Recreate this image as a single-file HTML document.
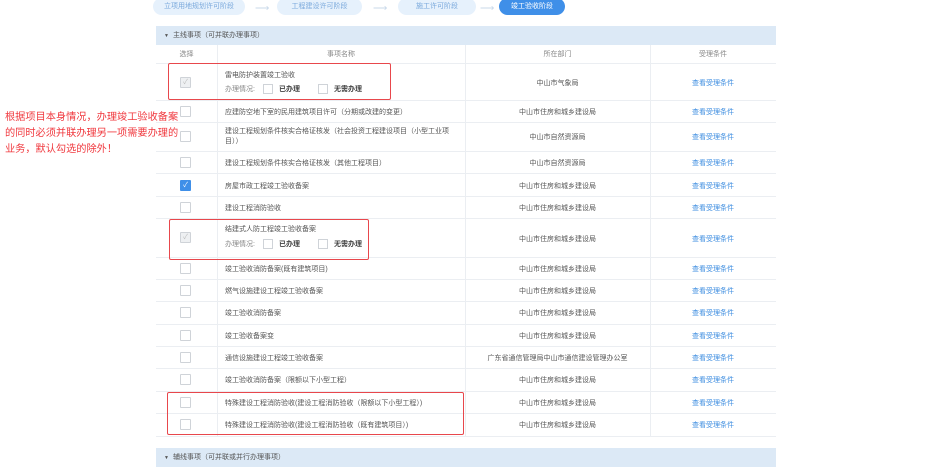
<!DOCTYPE html><html><head><meta charset="utf-8"><style>
body{margin:0;width:941px;height:461px;overflow:hidden;background:#fff;font-family:"Liberation Sans","Noto Sans CJK SC",sans-serif;font-size:7px;color:#555;position:relative}
.a{position:absolute}
.tab{position:absolute;top:-2px;height:17px;border-radius:9px;background:#e6f1fc;color:#7aa9dc;font-size:7px;line-height:17px;text-align:center}
.arr{position:absolute;top:3px;color:#c8d8ea;font-size:10px}
.band{position:absolute;left:156px;width:620px;height:19px;background:#dce9f6;font-size:7px;color:#555;line-height:19px}
.hl{position:absolute;left:156px;width:620px;height:1px;background:#ebeef2}
.vl{position:absolute;width:1px;background:#ebeef2;top:45px;height:391px}
.cb{position:absolute;left:180px;width:9px;height:9px;border:1px solid #cfd3d8;background:#fff;border-radius:1px}
.t{position:absolute;left:225px;white-space:nowrap}
.d{position:absolute;left:465px;width:185px;text-align:center}
.c{position:absolute;left:650px;width:126px;text-align:center;color:#3d8de0}
.red{position:absolute;border:1.5px solid #e8474c;border-radius:2px}
.sc{display:inline-block;width:8px;height:8px;border:1px solid #cfd3d8;vertical-align:middle;margin:0 6px 0 8px}
</style></head><body>
<div class="tab" style="left:153px;width:92px">立项用地规划许可阶段</div>
<div class="arr" style="left:255px">⟶</div>
<div class="tab" style="left:277px;width:85px">工程建设许可阶段</div>
<div class="arr" style="left:373px">⟶</div>
<div class="tab" style="left:398px;width:78px">施工许可阶段</div>
<div class="arr" style="left:480px">⟶</div>
<div class="tab" style="left:499px;width:66px;background:#3f8fe8;color:#fff">竣工验收阶段</div>

<div class="band" style="top:26px"><span style="margin:0 4px 0 8px;font-size:5px">▼</span>主线事项（可并联办理事项）</div>
<div class="band" style="top:448px"><span style="margin:0 4px 0 8px;font-size:5px">▼</span>辅线事项（可并联或并行办理事项）</div>

<div class="vl" style="left:217px"></div><div class="vl" style="left:465px"></div><div class="vl" style="left:650px"></div>
<div class="a" style="left:156px;width:61px;top:49px;text-align:center;color:#888">选择</div>
<div class="a" style="left:217px;width:248px;top:49px;text-align:center;color:#888">事项名称</div>
<div class="d" style="top:49px;color:#888">所在部门</div>
<div class="a" style="left:650px;width:126px;top:49px;text-align:center;color:#888">受理条件</div>

<div class="hl" style="top:63px"></div><div class="hl" style="top:100px"></div><div class="hl" style="top:122px"></div><div class="hl" style="top:151px"></div><div class="hl" style="top:173px"></div><div class="hl" style="top:196px"></div><div class="hl" style="top:218px"></div><div class="hl" style="top:257px"></div><div class="hl" style="top:279px"></div><div class="hl" style="top:301px"></div><div class="hl" style="top:324px"></div><div class="hl" style="top:346px"></div><div class="hl" style="top:368px"></div><div class="hl" style="top:391px"></div><div class="hl" style="top:413px"></div><div class="hl" style="top:436px"></div>

<div class="cb" style="top:77px;background:#eef0f2;color:#bbb;font-size:7px;line-height:9px;text-align:center">✓</div>
<div class="t" style="top:70px">雷电防护装置竣工验收</div>
<div class="t" style="top:84px;color:#888">办理情况:<span class="sc"></span><b style="color:#444">已办理</b><span class="sc" style="margin-left:18px"></span><b style="color:#444">无需办理</b></div>
<div class="d" style="top:78px">中山市气象局</div><div class="c" style="top:78px">查看受理条件</div>

<div class="cb" style="top:106px"></div><div class="t" style="top:107px">应建防空地下室的民用建筑项目许可（分期或改建的变更）</div><div class="d" style="top:107px">中山市住房和城乡建设局</div><div class="c" style="top:107px">查看受理条件</div>
<div class="cb" style="top:131px"></div><div class="t" style="top:127px;line-height:10px">建设工程规划条件核实合格证核发（社会投资工程建设项目（小型工业项<br>目））</div><div class="d" style="top:132px">中山市自然资源局</div><div class="c" style="top:132px">查看受理条件</div>
<div class="cb" style="top:157px"></div><div class="t" style="top:158px">建设工程规划条件核实合格证核发（其他工程项目）</div><div class="d" style="top:158px">中山市自然资源局</div><div class="c" style="top:158px">查看受理条件</div>
<div class="cb" style="top:180px;background:#3f8fe8;border-color:#3f8fe8;color:#fff;font-size:7px;line-height:9px;text-align:center">✓</div><div class="t" style="top:181px">房屋市政工程竣工验收备案</div><div class="d" style="top:181px">中山市住房和城乡建设局</div><div class="c" style="top:181px">查看受理条件</div>
<div class="cb" style="top:202px"></div><div class="t" style="top:203px">建设工程消防验收</div><div class="d" style="top:203px">中山市住房和城乡建设局</div><div class="c" style="top:203px">查看受理条件</div>

<div class="cb" style="top:232px;background:#eef0f2;color:#bbb;font-size:7px;line-height:9px;text-align:center">✓</div>
<div class="t" style="top:224px">结建式人防工程竣工验收备案</div>
<div class="t" style="top:239px;color:#888">办理情况:<span class="sc"></span><b style="color:#444">已办理</b><span class="sc" style="margin-left:18px"></span><b style="color:#444">无需办理</b></div>
<div class="d" style="top:234px">中山市住房和城乡建设局</div><div class="c" style="top:234px">查看受理条件</div>

<div class="cb" style="top:263px"></div><div class="t" style="top:264px">竣工验收消防备案(既有建筑项目)</div><div class="d" style="top:264px">中山市住房和城乡建设局</div><div class="c" style="top:264px">查看受理条件</div>
<div class="cb" style="top:285px"></div><div class="t" style="top:286px">燃气设施建设工程竣工验收备案</div><div class="d" style="top:286px">中山市住房和城乡建设局</div><div class="c" style="top:286px">查看受理条件</div>
<div class="cb" style="top:307px"></div><div class="t" style="top:308px">竣工验收消防备案</div><div class="d" style="top:308px">中山市住房和城乡建设局</div><div class="c" style="top:308px">查看受理条件</div>
<div class="cb" style="top:330px"></div><div class="t" style="top:331px">竣工验收备案变</div><div class="d" style="top:331px">中山市住房和城乡建设局</div><div class="c" style="top:331px">查看受理条件</div>
<div class="cb" style="top:352px"></div><div class="t" style="top:353px">通信设施建设工程竣工验收备案</div><div class="d" style="top:353px">广东省通信管理局中山市通信建设管理办公室</div><div class="c" style="top:353px">查看受理条件</div>
<div class="cb" style="top:374px"></div><div class="t" style="top:375px">竣工验收消防备案（限额以下小型工程）</div><div class="d" style="top:375px">中山市住房和城乡建设局</div><div class="c" style="top:375px">查看受理条件</div>
<div class="cb" style="top:397px"></div><div class="t" style="top:398px">特殊建设工程消防验收(建设工程消防验收（限额以下小型工程）)</div><div class="d" style="top:398px">中山市住房和城乡建设局</div><div class="c" style="top:398px">查看受理条件</div>
<div class="cb" style="top:419px"></div><div class="t" style="top:420px">特殊建设工程消防验收(建设工程消防验收（既有建筑项目）)</div><div class="d" style="top:420px">中山市住房和城乡建设局</div><div class="c" style="top:420px">查看受理条件</div>

<div class="red" style="left:168px;top:63px;width:221px;height:35px"></div>
<div class="red" style="left:169px;top:219px;width:198px;height:39px"></div>
<div class="red" style="left:167px;top:392px;width:295px;height:41px"></div>

<div class="a" style="left:5px;top:110px;color:#f0383e;font-size:10.2px;line-height:16px;white-space:nowrap">根据项目本身情况，办理竣工验收备案<br>的同时必须并联办理另一项需要办理的<br>业务，默认勾选的除外！</div>
</body></html>
